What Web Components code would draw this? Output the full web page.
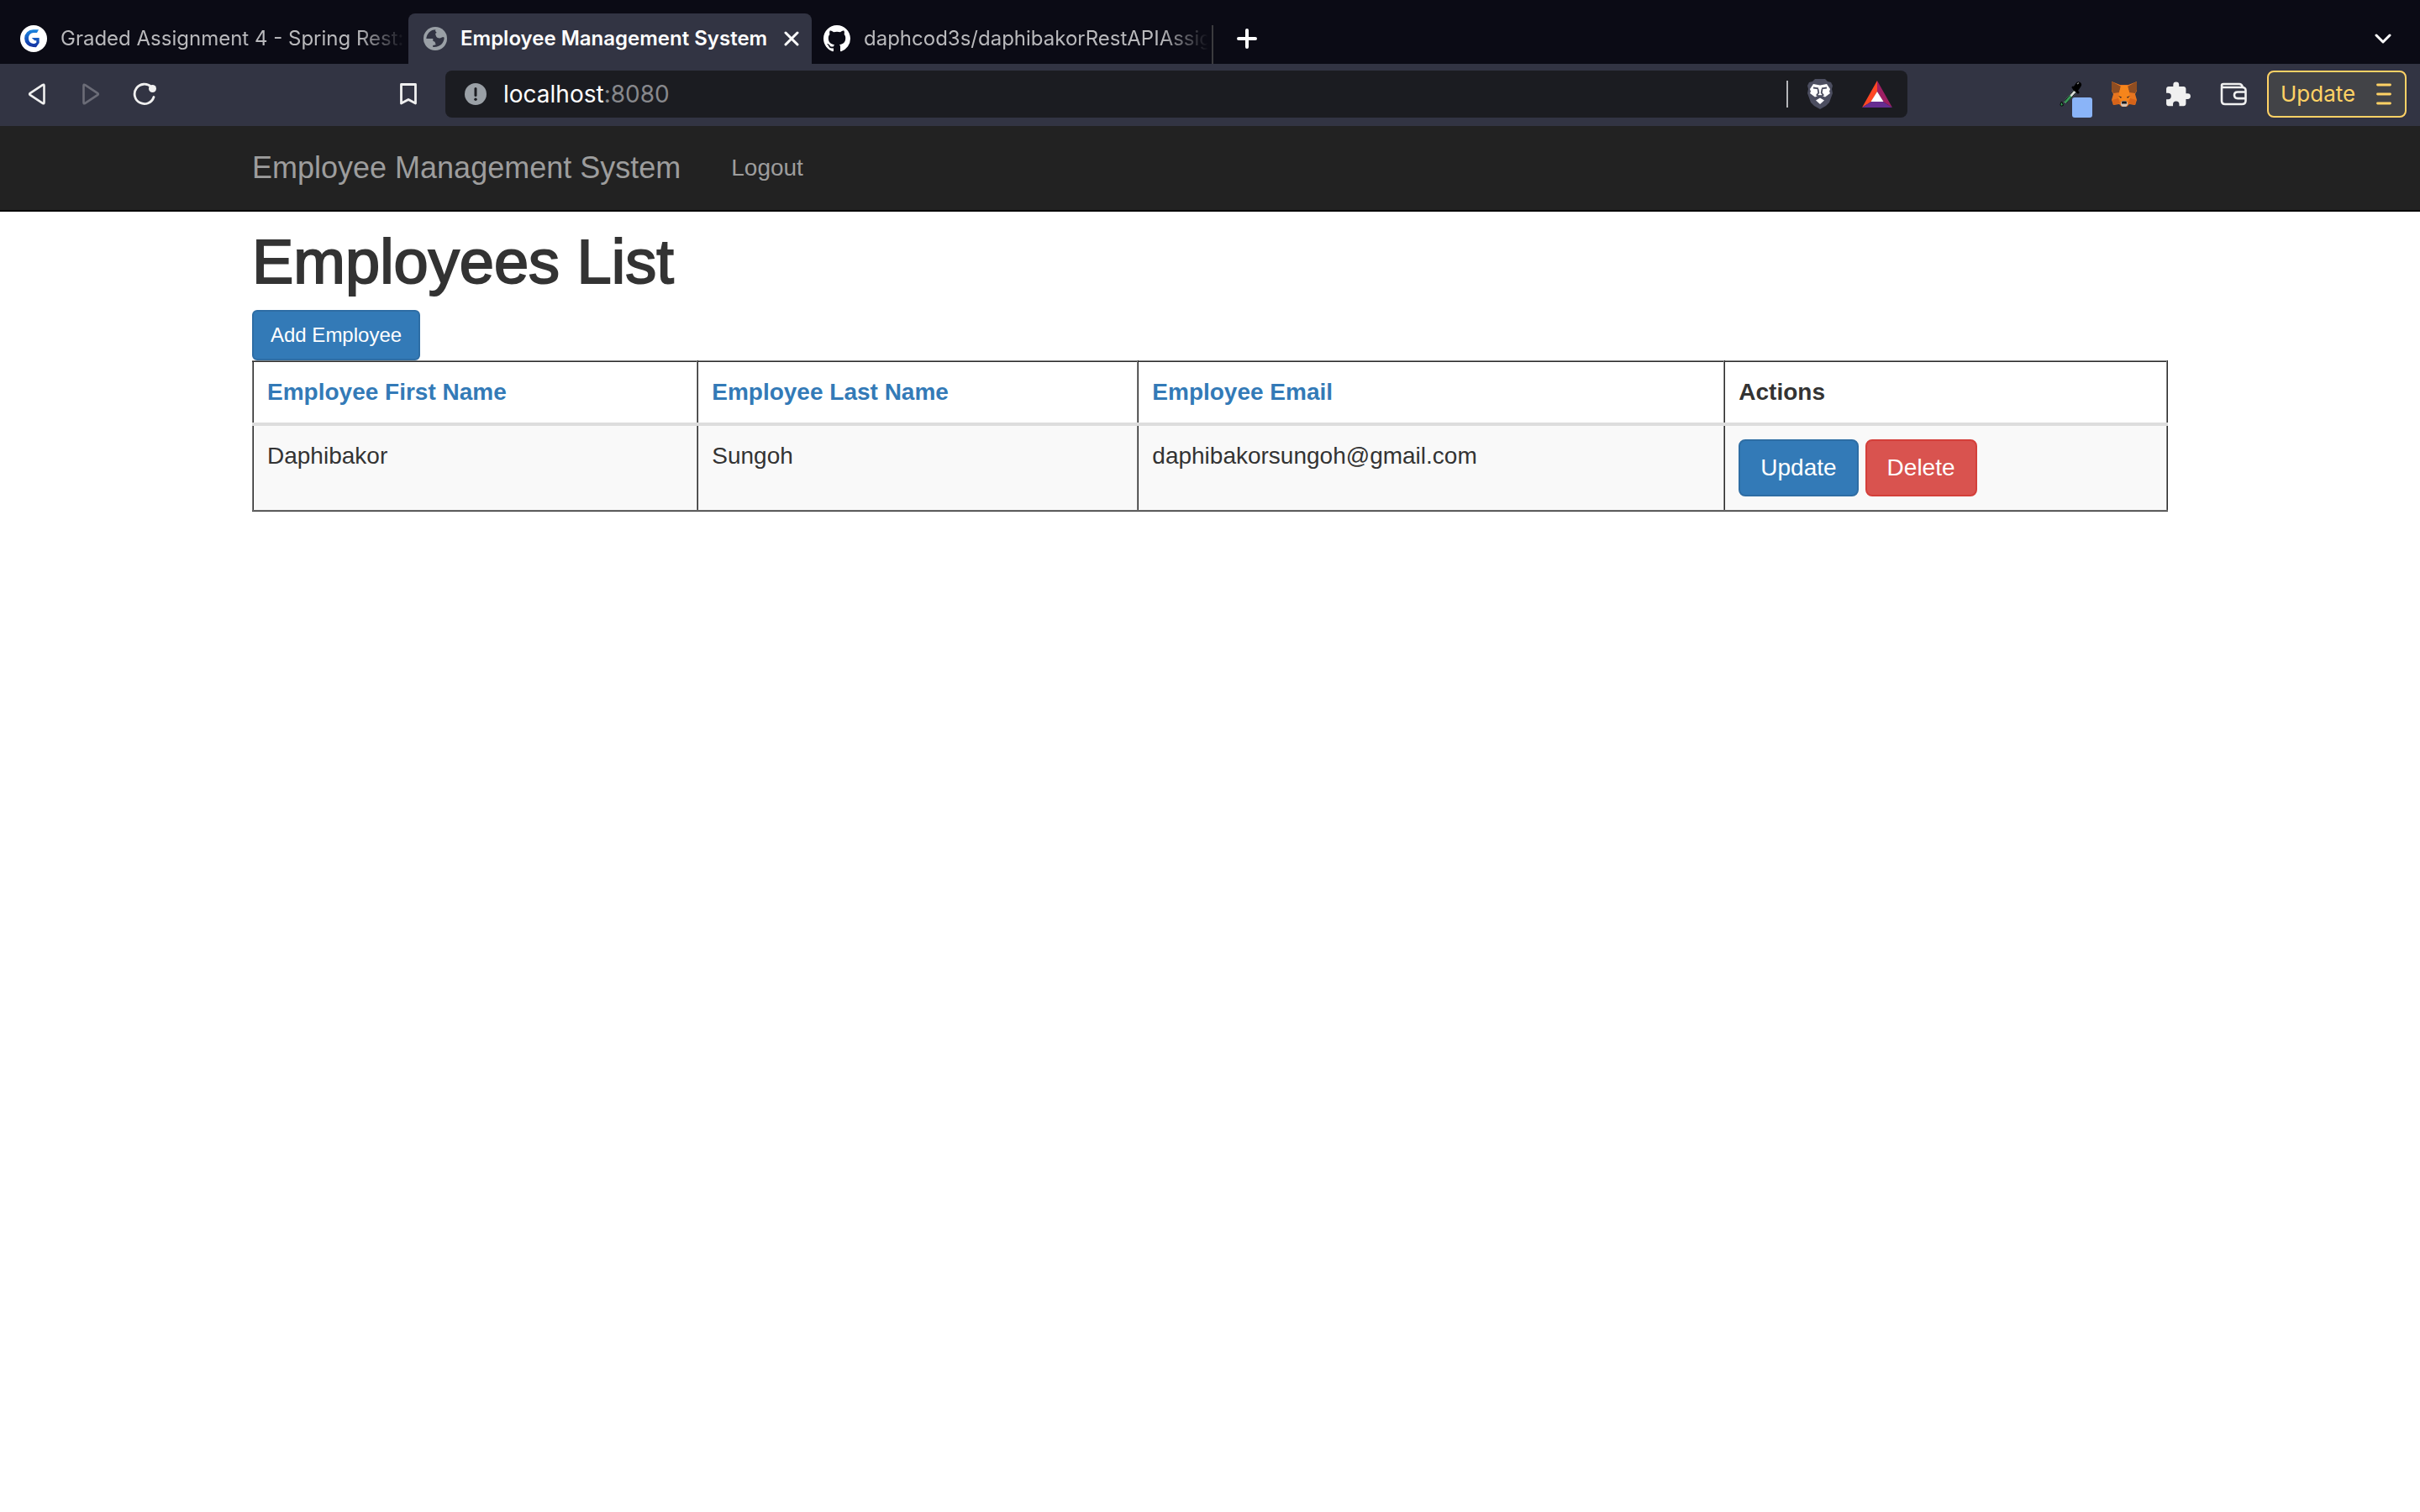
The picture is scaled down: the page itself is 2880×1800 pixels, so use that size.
<!DOCTYPE html>
<html lang="en">
<head>
<meta charset="utf-8">
<title>Employee Management System</title>
<style>
  body { margin: 0; background: #fff; color: #333; font-family: "Liberation Sans", Arial, sans-serif; font-size: 28px; line-height: 40px; }
</style>
</head>
<body>
<browser-window>
  <tab-strip slot="chrome">
    <browser-tab label="Graded Assignment 4 - Spring Rest:">
      <svg slot="icon" width="32" height="32" viewBox="0 0 32 32"><defs><linearGradient id="g" x1="0" y1="0" x2="0" y2="1"><stop offset="0" stop-color="#1b86e0"/><stop offset="1" stop-color="#1430a0"/></linearGradient></defs><circle cx="16" cy="16" r="16" fill="#fff"/><path fill="url(#g)" d="M22 5.3h-6.500a10.200 10.200 0 0 0 0 20.700l3.500.300 3.700-5.300V15h-9l3.600 3.200h2v2.600c-1 .9-2.300 1.300-3.700 1.300a6.700 6.700 0 0 1-.2-13.200H20z"/></svg>
    </browser-tab>
    <browser-tab label="Employee Management System" active closable>
      <svg slot="icon" width="28" height="28" viewBox="0 0 28 28"><circle cx="14" cy="14" r="14" fill="#9aa0a6"/><path fill="#323443" d="M14.500 3.200c-.8 1.700-.3 2.400.8 3.100.4.400-.1 1.200-1.300 1.500l1 3.400c1.100 1.500 2.500 2.300 4.500 2.200l3.700-1.500 1.500.8c-.2 6.200-4.700 11.100-12 11.300l-1.500-.1v-2l2.400-.3c1.600-.4 1.200-1.700.2-2.200v-1.500l-2.500-1.200v-2.800H7.500l-4.200.2C3.700 8.300 8.300 3.300 14.500 3.200z"/></svg>
    </browser-tab>
    <browser-tab label="daphcod3s/daphibakorRestAPIAssig">
      <svg slot="icon" width="32" height="32" viewBox="0 0 16 16"><path fill="#fff" d="M8 0C3.580 0 0 3.580 0 8c0 3.540 2.290 6.530 5.470 7.590.4.070.55-.17.55-.38 0-.19-.01-.82-.01-1.490-2.010.37-2.530-.49-2.690-.94-.09-.23-.48-.94-.82-1.130-.28-.15-.68-.52-.01-.53.63-.01 1.080.58 1.230.82.72 1.210 1.870.87 2.330.66.070-.52.28-.87.51-1.070-1.780-.2-3.640-.89-3.640-3.950 0-.87.31-1.590.82-2.150-.08-.2-.36-1.020.08-2.120 0 0 .67-.21 2.200.82a7.600 7.600 0 0 1 4 0c1.530-1.040 2.200-.82 2.200-.82.44 1.100.16 1.920.08 2.120.51.56.82 1.270.82 2.150 0 3.070-1.870 3.750-3.650 3.950.29.25.54.73.54 1.480 0 1.070-.01 1.930-.01 2.200 0 .21.15.46.55.38A8.010 8.010 0 0 0 16 8c0-4.420-3.580-8-8-8z"/></svg>
    </browser-tab>
  </tab-strip>
  <browser-toolbar slot="chrome" host="localhost" port=":8080"></browser-toolbar>
  <site-navbar brand="Employee Management System"><a slot="links" href="#logout">Logout</a></site-navbar>
  <employee-list heading="Employees List"></employee-list>
</browser-window>

<script>
const define = (name, html, fill) => customElements.define(name, class extends HTMLElement {
  connectedCallback() {
    if (this.shadowRoot) return;
    const t = document.createElement('template');
    t.innerHTML = html;
    const root = this.attachShadow({ mode: 'open' });
    root.append(t.content.cloneNode(true));
    if (fill) fill(root, this);
  }
});

define('browser-window', `
  <style>:host { display: flex; flex-direction: column; min-height: 100vh; } main { flex: 1; }</style>
  <slot name="chrome"></slot><main><slot></slot></main>`);

define('tab-strip', `
  <style>
    :host { display: flex; align-items: flex-end; height: 76px; background: #0b0b15; }
    button { border: 0; padding: 0; background: none; display: flex; align-items: center; justify-content: center; height: 60px; width: 80px; }
    .div { width: 2px; height: 46px; background: #3b3b3e; }
    .list { margin-left: auto; width: 88px; }
  </style>
  <slot></slot><span class="div"></span>
  <button aria-label="New tab"><svg width="24" height="24" viewBox="0 0 24 24"><path d="M12 2v20M2 12h20" stroke="#fff" stroke-width="4" stroke-linecap="round"/></svg></button>
  <button class="list" aria-label="Search tabs"><svg width="20" height="14" viewBox="0 0 20 14"><path d="M2 3l8 8 8-8" fill="none" stroke="#fff" stroke-width="3" stroke-linecap="round" stroke-linejoin="round"/></svg></button>`);

define('browser-tab', `
  <style>
    :host { display: flex; align-items: center; box-sizing: border-box; width: 476px; height: 60px; padding-left: 14px; border-radius: 8px 8px 0 0; gap: 16px; font-family: Inter, sans-serif; font-size: 24px; line-height: 32px; color: #b9b9bc; }
    :host(:first-child) { width: 486px; padding-left: 24px; }
    :host([active]) { width: 480px; padding: 0 8px 0 18px; background: #323443; color: #fff; font-weight: 600; }
    .label { flex: 1; white-space: nowrap; }
    :host(:not([active])) .label { -webkit-mask: linear-gradient(to left, transparent 4px, #000 60px); mask: linear-gradient(to left, transparent 4px, #000 60px); }
    button { display: none; border: 0; background: none; padding: 0; margin-left: -8px; width: 32px; height: 32px; align-items: center; justify-content: center; }
    :host([closable]) button { display: flex; }
    slot { display: flex; }
  </style>
  <slot name="icon"></slot><span class="label"></span>
  <button aria-label="Close tab"><svg width="18" height="18" viewBox="0 0 18 18"><path d="M2 2l14 14M16 2L2 16" stroke="#fff" stroke-width="3" stroke-linecap="round"/></svg></button>`,
  (r, el) => { r.querySelector('.label').textContent = el.getAttribute('label'); });

define('browser-toolbar', `
  <style>
    :host { display: flex; align-items: center; box-sizing: border-box; height: 74px; padding: 8px 16px 10px 12px; background: #323443; font-family: Inter, sans-serif; }
    button { flex: none; display: flex; align-items: center; justify-content: center; width: 64px; height: 56px; border: 0; padding: 0; background: none; font: inherit; }
    .book { margin-left: auto; }
    .left { display: flex; width: 506px; }
    .address { flex: 1; display: flex; align-items: center; box-sizing: border-box; height: 56px; margin-left: 12px; margin-right: 174px; padding: 0 2px 0 23px; border-radius: 8px; background: #1b1c21; }
    .address button { width: 68px; }
    .url { flex: 1; padding-left: 20px; font-size: 28px; line-height: 40px; color: #fff; }
    .url i { font-style: normal; color: #87888c; }
    .rule { width: 2px; height: 32px; background: #b5b6b9; margin-right: 4px; }
    .right { display: flex; align-items: center; }
    .right .picker { width: 52px; }
    .right .wallet { width: 68px; }
    .right .update { width: 166px; box-sizing: border-box; justify-content: space-between; padding: 0 16px 0 14px; border: 2px solid #ffd265; border-radius: 8px; background: #424347; color: #ffd265; font-size: 26px; line-height: 36px; margin-left: 6px; }
  </style>
  <div class="left">
    <button aria-label="Back"><svg width="22" height="28" viewBox="0 0 22 28"><path d="M19.500 4v20q0 2-1.800.9L3 15.200q-1.700-1.200 0-2.400L17.700 3.100Q19.500 2 19.500 4z" fill="none" stroke="#f0f0f0" stroke-width="2.600"/></svg></button>
    <button aria-label="Forward"><svg width="22" height="28" viewBox="0 0 22 28"><path d="M2.500 4v20q0 2 1.800.9L19 15.200q1.700-1.200 0-2.400L4.300 3.100Q2.500 2 2.500 4z" fill="none" stroke="#6b6c77" stroke-width="2.600"/></svg></button>
    <button aria-label="Reload"><svg width="28" height="28" viewBox="0 0 28 28"><path d="M22 5.500A11.700 11.700 0 1 0 25 17.500" fill="none" stroke="#f0f0f0" stroke-width="2.800" stroke-linecap="round"/><circle cx="23.500" cy="7.500" r="4.500" fill="#f0f0f0"/></svg></button>
    <button class="book" aria-label="Bookmark"><svg width="22" height="28" viewBox="0 0 22 28"><path d="M2.500 2.500h17v22.500L11 20.500 2.500 25z" fill="none" stroke="#f0f0f0" stroke-width="2.800" stroke-linejoin="round"/></svg></button>
  </div>
  <div class="address">
    <svg width="26" height="26" viewBox="0 0 26 26"><circle cx="13" cy="13" r="13" fill="#9aa0a6"/><path d="M13 6.500v8" stroke="#1b1c21" stroke-width="3" stroke-linecap="round"/><circle cx="13" cy="19.300" r="1.700" fill="#1b1c21"/></svg>
    <span class="url"><span></span><i></i></span><span class="rule"></span>
    <button aria-label="Brave Shields"><svg width="32" height="38" viewBox="0 0 32 38"><path fill="#4c4e60" d="M10 1h12l3 3 4 1 2 4-1 4 1 5-4 11-4 4-7 4-7-4-4-4-4-11 1-5-1-4 2-4 4-1z"/><path fill="#fff" d="M8 7l8 1.500L24 7l4 6-1 3 1 2-6 4.500-6-2.500-6 2.500L4 18l1-2-1-3z"/><path fill="#fff" d="M16 23.500l5 3-5 4.500-5-4.500z"/><path fill="none" stroke="#4c4e60" stroke-width="1.800" d="M8 11.500l6 .8M24 11.500l-6 .8M13.500 13l.8 4.500-2 2.500 3.700 2.500 3.700-2.500-2-2.500.8-4.500"/></svg></button>
    <button aria-label="Brave Rewards"><svg width="36" height="32" viewBox="0 0 36 32"><path fill="#ff4724" d="M18 0L0 32l11-7 7-12z"/><path fill="#9e1f63" d="M18 0v13l7 12 11 7z"/><path fill="#662d91" d="M0 32l11-7h14l11 7z"/><path fill="#fff" d="M18 13l7.500 12h-15z"/></svg></button>
  </div>
  <div class="right">
    <button class="picker" aria-label="Color picker"><svg width="40" height="56" viewBox="0 0 40 56"><g transform="translate(2 11)"><path d="M4 26L17 11l3 3L7 28z" fill="#d8dcd8"/><path d="M4 26l7-8 3 3-7 7z" fill="#3a9a58"/><path d="M4.500 26L17 11.500M7 28L19.500 14" stroke="#102018" stroke-width="1"/><path d="M15 9l6 6" stroke="#000" stroke-width="3" stroke-linecap="round"/><path d="M18.500 10.500L21.500 6" stroke="#000" stroke-width="7" stroke-linecap="round"/><path d="M20 5l2-1.500" stroke="#888" stroke-width="1.500"/><path d="M1.500 26Q-1.500 31 1.500 31T3 29z" fill="#35a055" stroke="#000"/></g><rect x="16" y="32" width="24" height="24" rx="3" fill="#8ab4f8"/></svg></button>
    <button aria-label="MetaMask"><svg width="32" height="32" viewBox="0 0 32 32"><path fill="#e8751f" d="M1 1l10 4h10L31 1v11l-2 4 2 7-2 6-7-1-3 3h-6l-3-3-7 1-2-6 2-7-2-4z"/><path fill="#8e4d22" d="M1 1l11 6-2 7-7 1-2-4zM31 1L20 7l2 7 7 1 2-4z"/><path fill="#f6851b" d="M12 6h8l2 8 1 7-4 4h-6l-4-4 1-7z"/><path fill="#d66319" d="M2 23l7-2 2 6-8 2zM30 23l-7-2-2 6 8 2z"/><path fill="#3b2a2a" d="M9 18l4 1.500-1 1.500zM23 18l-4 1.500 1 1.500z"/><path fill="#d5c3b5" d="M12 26l2-2h4l2 2v3l-2 2h-4l-2-2z"/><path fill="#16181c" d="M13.500 24.500h5l.7 3h-6.400z"/></svg></button>
    <button aria-label="Extensions"><svg width="33" height="33" viewBox="0.500 0 24 24"><path fill="#f0f0f0" d="M20.500 11H19V7c0-1.100-.9-2-2-2h-4V3.500a2.500 2.500 0 0 0-5 0V5H4c-1.100 0-2 .9-2 2v3.800h1.500a2.700 2.700 0 0 1 0 5.400H2V20c0 1.100.9 2 2 2h3.800v-1.500a2.700 2.700 0 0 1 5.400 0V22H17c1.100 0 2-.9 2-2v-4h1.500a2.500 2.500 0 0 0 0-5z"/></svg></button>
    <button class="wallet" aria-label="Wallet"><svg width="32" height="28" viewBox="0 0 32 28"><g fill="none" stroke="#f0f0f0" stroke-width="2.600"><path d="M2 5.500V22q0 4 4 4h20q4.500 0 4.500-4V9.500q0-3.500-4-3.500H4q-2 0-2-2 0-2 2-2h19q3 0 4 4"/><path d="M30 11.500h-9q-4 0-4 3.800t4 3.800h9"/></g></svg></button>
    <button class="update">Update<svg width="18" height="26" viewBox="0 0 18 26"><path d="M1.500 2h15M1.500 13h15M1.500 24h15" stroke="#ffd265" stroke-width="2.800" stroke-linecap="round"/></svg></button>
  </div>`,
  (r, el) => {
    r.querySelector('.url span').textContent = el.getAttribute('host');
    r.querySelector('.url i').textContent = el.getAttribute('port');
  });

define('site-navbar', `
  <style>
    :host { display: block; background: #222; border-bottom: 2px solid #080808; }
    nav { display: flex; align-items: center; box-sizing: border-box; max-width: 2340px; height: 100px; margin: 0 auto; padding: 0 30px; gap: 60px; }
    a, ::slotted(a) { color: #9d9d9d; text-decoration: none; }
    a { font-size: 36px; }
  </style>
  <nav><a href="#home"></a><slot name="links"></slot></nav>`,
  (r, el) => { r.querySelector('a').textContent = el.getAttribute('brand'); });

define('action-button', `
  <style>
    :host { display: inline-block; vertical-align: top; }
    button { display: block; box-sizing: border-box; margin: 0; padding: 12px 24px; border: 2px solid #2e6da4; border-radius: 8px; background: #337ab7; color: #fff; font: inherit; font-size: 28px; line-height: 40px; }
    :host([small]) button { padding: 10px 20px; border-radius: 6px; font-size: 24px; line-height: 36px; }
    :host([danger]) button { border-color: #d43f3a; background: #d9534f; }
  </style>
  <button><slot></slot></button>`);

define('employee-list', `
  <style>
    :host { display: block; box-sizing: border-box; max-width: 2340px; margin: 0 auto; padding: 20px 30px; }
    h1 { margin: 0 0 17px; font-size: 74px; font-weight: 500; line-height: 80px; -webkit-text-stroke: 2px #333; }
    action-button[small] { display: block; }
    table { width: 100%; border-collapse: collapse; border: 2px outset #808080; }
    th, td { padding: 16px; text-align: left; vertical-align: top; border: 2px inset #808080; }
    th { border-bottom: 4px solid #ddd; }
    tbody tr:nth-child(odd) { background: #f9f9f9; }
    a { color: #337ab7; text-decoration: none; }
    .actions { display: flex; gap: 8px; }
  </style>
  <h1></h1>
  <action-button small>Add Employee</action-button>
  <table>
    <thead><tr>
      <th><a href="#first">Employee First Name</a></th>
      <th><a href="#last">Employee Last Name</a></th>
      <th><a href="#email">Employee Email</a></th>
      <th>Actions</th>
    </tr></thead>
    <tbody><tr>
      <td>Daphibakor</td><td>Sungoh</td><td>daphibakorsungoh@gmail.com</td>
      <td><div class="actions"><action-button>Update</action-button><action-button danger>Delete</action-button></div></td>
    </tr></tbody>
  </table>`,
  (r, el) => { r.querySelector('h1').textContent = el.getAttribute('heading'); });
</script>
</body>
</html>
